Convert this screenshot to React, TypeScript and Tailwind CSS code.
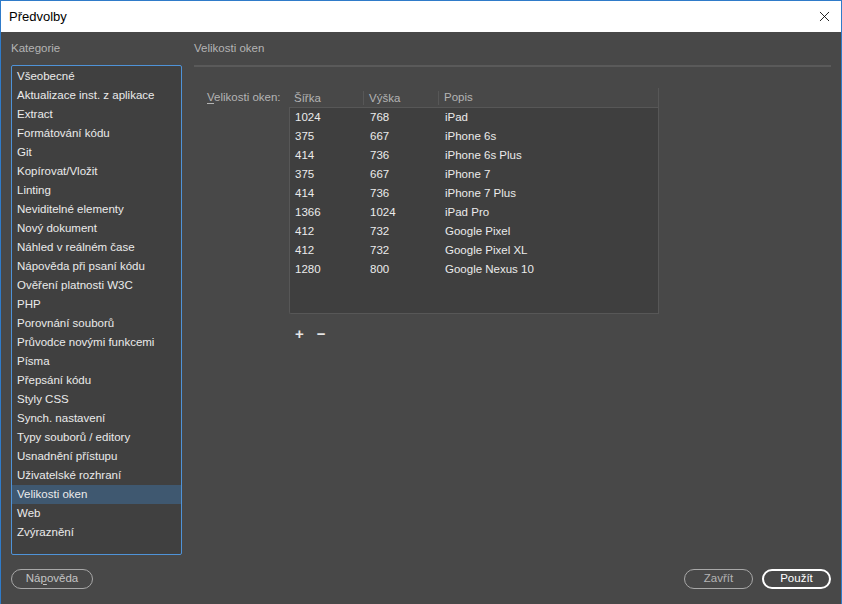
import { X } from "lucide-react"

const categories = [
  "Všeobecné",
  "Aktualizace inst. z aplikace",
  "Extract",
  "Formátování kódu",
  "Git",
  "Kopírovat/Vložit",
  "Linting",
  "Neviditelné elementy",
  "Nový dokument",
  "Náhled v reálném čase",
  "Nápověda při psaní kódu",
  "Ověření platnosti W3C",
  "PHP",
  "Porovnání souborů",
  "Průvodce novými funkcemi",
  "Písma",
  "Přepsání kódu",
  "Styly CSS",
  "Synch. nastavení",
  "Typy souborů / editory",
  "Usnadnění přístupu",
  "Uživatelské rozhraní",
  "Velikosti oken",
  "Web",
  "Zvýraznění",
]

const sizes = [
  ["1024", "768", "iPad"],
  ["375", "667", "iPhone 6s"],
  ["414", "736", "iPhone 6s Plus"],
  ["375", "667", "iPhone 7"],
  ["414", "736", "iPhone 7 Plus"],
  ["1366", "1024", "iPad Pro"],
  ["412", "732", "Google Pixel"],
  ["412", "732", "Google Pixel XL"],
  ["1280", "800", "Google Nexus 10"],
]

export default function App() {
  return (
    <div
      className="w-[842px] h-[604px] flex flex-col border-x border-t border-[#2f7bc9] bg-[#484848] text-[11.5px] overflow-hidden"
      style={{ fontFamily: '"Liberation Sans", Arial, sans-serif' }}
    >
      {/* Title bar */}
      <div className="h-[31px] shrink-0 bg-white flex items-center justify-between pl-[8px] pr-[8px]">
        <span className="text-[13px] text-black">Předvolby</span>
        <X className="w-[17px] h-[17px] text-black" strokeWidth={1.2} />
      </div>

      <div className="flex-1 flex flex-col px-[10px]">
        <div className="flex-1 flex">
          {/* Categories */}
          <div className="w-[171px] flex flex-col">
            <div className="h-[33px] flex items-center text-[#b4b4b4]">Kategorie</div>
            <div className="h-[490px] border border-[#4f93d8] rounded-[2px] bg-[#404040] py-[1px]">
              {categories.map((c) => (
                <div
                  key={c}
                  className={`h-[19px] leading-[19px] pl-[5px] text-[#ebebeb] ${
                    c === "Velikosti oken" ? "bg-[#3f5870]" : ""
                  }`}
                >
                  {c}
                </div>
              ))}
            </div>
          </div>

          {/* Panel */}
          <div className="flex-1 flex flex-col pl-[12px]">
            <div className="h-[33px] flex items-center text-[#b4b4b4]">Velikosti oken</div>
            <div className="h-[2px] bg-[#5a5a5a]" />
            <div className="flex pl-[13px] pt-[21px]">
              <div className="w-[82px] pt-[1px] text-[#b4b4b4]">
                <span className="underline underline-offset-2">V</span>elikosti oken:
              </div>
              <div className="flex flex-col">
                <div className="w-[370px] border-r border-[#575757]">
                  <div className="flex h-[20px] items-center text-[#b4b4b4] border-b border-[#575757]">
                    <div className="w-[75px] pl-[5px] border-r border-[#575757] h-[14px] leading-[14px]">Šířka</div>
                    <div className="w-[75px] pl-[5px] border-r border-[#575757] h-[14px] leading-[14px]">Výška</div>
                    <div className="flex-1 pl-[5px]">Popis</div>
                  </div>
                  <div className="h-[206px] bg-[#3f3f3f] border-l border-b border-[#575757] rounded-bl-[2px]">
                    {sizes.map(([w, h, name]) => (
                      <div key={name} className="flex h-[19px] items-center text-[#ebebeb]">
                        <div className="w-[75px] pl-[5px]">{w}</div>
                        <div className="w-[75px] pl-[5px]">{h}</div>
                        <div className="flex-1 pl-[5px]">{name}</div>
                      </div>
                    ))}
                  </div>
                </div>
                <div className="flex items-center gap-[13px] pl-[6px] pt-[9px] text-[#e6e6e6] font-bold text-[15px]">
                  <span>+</span>
                  <span>−</span>
                </div>
              </div>
            </div>
          </div>
        </div>

        {/* Footer */}
        <div className="h-[49px] flex items-center justify-between pb-[2px]">
          <button className="w-[82px] h-[20px] rounded-full border border-[#a8a8a8] text-[#c4c4c4] leading-none">
            Ná<span className="underline underline-offset-2">p</span>ověda
          </button>
          <div className="flex gap-[9px]">
            <button className="w-[69px] h-[20px] rounded-full border border-[#a8a8a8] text-[#b4b4b4] leading-none">
              Zavřít
            </button>
            <button className="w-[69px] h-[20px] rounded-full border-2 border-white text-white leading-none">
              Použít
            </button>
          </div>
        </div>
      </div>
    </div>
  )
}
